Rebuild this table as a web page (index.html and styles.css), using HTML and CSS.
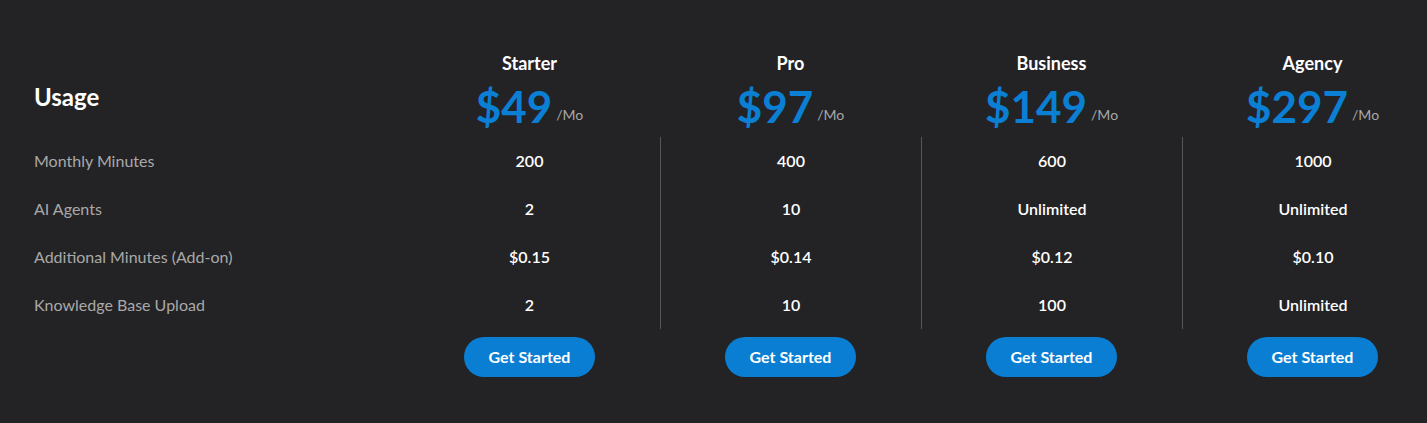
FILE: index.html
```html
<!DOCTYPE html>
<html lang="en">
<head>
    <meta charset="UTF-8">
    <meta name="viewport" content="width=device-width, initial-scale=1.0">
    <title>Pricing - Usage</title>
    <link rel="stylesheet" href="styles.css">
</head>
<body>
    <div class="pricing-table">
        <!-- Header row -->
        <div class="cell head-label">Usage</div>
        <div class="cell plan-head">
            <div class="plan-name">Starter</div>
            <div class="plan-price"><span class="amount">$49</span><span class="period">/Mo</span></div>
        </div>
        <div class="cell plan-head">
            <div class="plan-name">Pro</div>
            <div class="plan-price"><span class="amount">$97</span><span class="period">/Mo</span></div>
        </div>
        <div class="cell plan-head">
            <div class="plan-name">Business</div>
            <div class="plan-price"><span class="amount">$149</span><span class="period">/Mo</span></div>
        </div>
        <div class="cell plan-head">
            <div class="plan-name">Agency</div>
            <div class="plan-price"><span class="amount">$297</span><span class="period">/Mo</span></div>
        </div>

        <!-- Usage rows -->
        <div class="cell row-label">Monthly Minutes</div>
        <div class="cell value">200</div>
        <div class="cell value divided">400</div>
        <div class="cell value divided">600</div>
        <div class="cell value divided">1000</div>

        <div class="cell row-label">AI Agents</div>
        <div class="cell value">2</div>
        <div class="cell value divided">10</div>
        <div class="cell value divided">Unlimited</div>
        <div class="cell value divided">Unlimited</div>

        <div class="cell row-label">Additional Minutes (Add-on)</div>
        <div class="cell value">$0.15</div>
        <div class="cell value divided">$0.14</div>
        <div class="cell value divided">$0.12</div>
        <div class="cell value divided">$0.10</div>

        <div class="cell row-label">Knowledge Base Upload</div>
        <div class="cell value">2</div>
        <div class="cell value divided">10</div>
        <div class="cell value divided">100</div>
        <div class="cell value divided">Unlimited</div>

        <!-- Actions -->
        <div class="cell"></div>
        <div class="cell action"><button class="start-btn">Get Started</button></div>
        <div class="cell action"><button class="start-btn">Get Started</button></div>
        <div class="cell action"><button class="start-btn">Get Started</button></div>
        <div class="cell action"><button class="start-btn">Get Started</button></div>
    </div>
</body>
</html>
```

FILE: styles.css
```css
body {
    margin: 0;
    background: #232325;
    font-family: 'Lato', 'Open Sans', sans-serif;
    color: #ffffff;
    overflow: hidden;
}

.pricing-table {
    display: grid;
    grid-template-columns: 365px repeat(4, 261px);
    padding: 45px 0 0 34px;
    width: max-content;
}

.cell {
    display: flex;
    align-items: center;
}

.head-label {
    font-size: 24px;
    font-weight: 700;
    padding-top: 10px;
}

.plan-head {
    flex-direction: column;
    align-items: center;
    height: 92px;
}

.plan-name {
    font-size: 18px;
    font-weight: 700;
    line-height: 22px;
    margin-top: 7px;
}

.plan-price {
    display: flex;
    align-items: baseline;
    margin-top: 6px;
}

.amount {
    font-size: 44px;
    font-weight: 700;
    color: #0a7fd4;
    line-height: 52px;
}

.period {
    font-size: 14px;
    color: #a8a8a8;
    margin-left: 4px;
    position: relative;
    top: -3px;
}

.row-label {
    height: 48px;
    padding-bottom: 2px;
    box-sizing: border-box;
    font-size: 16px;
    color: #a9a9a9;
}

.value {
    height: 48px;
    padding-bottom: 2px;
    box-sizing: border-box;
    justify-content: center;
    font-size: 16px;
    font-weight: 600;
}

.divided {
    border-left: 1px solid #55565a;
}

.action {
    justify-content: center;
    padding-top: 8px;
}

.start-btn {
    width: 131px;
    height: 40px;
    border: none;
    border-radius: 20px;
    background: #0a7ed3;
    color: #ffffff;
    font-family: 'Lato', sans-serif;
    font-size: 16px;
    font-weight: 700;
    padding: 0 0 2px;
    cursor: pointer;
}
```
